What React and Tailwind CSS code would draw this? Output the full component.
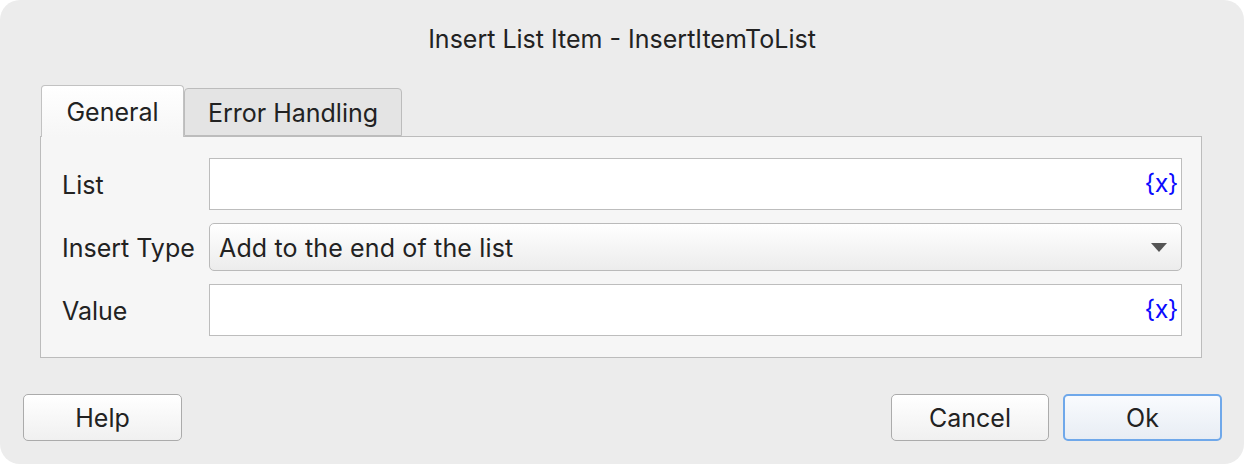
import React from 'react';

const font = { fontFamily: 'Inter, "Noto Sans", sans-serif' };

const VarButton = () => (
  <span className="text-[25px] text-[#0a0aff] leading-none tracking-[-0.5px] pb-[2px]">{'{x}'}</span>
);

const TextRow = ({ label }) => (
  <div className="flex items-center gap-0">
    <div className="w-[168px] pl-[21px] pt-[3px] text-[25px] text-[#222]">{label}</div>
    <div className="flex-1 h-[52px] bg-white border border-[#bdbdbd] flex items-center justify-end pr-[3px]">
      <VarButton />
    </div>
  </div>
);

export default function App() {
  return (
    <div style={font} className="w-[1244px] h-[464px] bg-[#ececec] rounded-[20px] flex flex-col text-[#222] overflow-hidden">
      <div className="h-[82px] flex items-center justify-center pb-[2px] text-[25px]">
        Insert List Item - InsertItemToList
      </div>

      <div className="px-[40px] pr-[42px]">
        <div className="flex items-end h-[54px] pl-[1px]">
          <div className="relative z-10 w-[143px] h-[52px] -mb-px bg-gradient-to-b from-white to-[#f6f6f6] border border-b-0 border-[#c2c2c2] rounded-t-[4px] flex items-center justify-center pt-[3px] text-[25px]">
            General
          </div>
          <div className="w-[218px] h-[48px] bg-[#e4e4e4] border border-[#bcbcbc] rounded-t-[4px] flex items-center justify-center pt-[3px] text-[25px]">
            Error Handling
          </div>
        </div>
        <div className="h-[222px] bg-[#f6f6f6] border border-[#bcbcbc] pt-[21px] pr-[19px] flex flex-col gap-[13px]">
          <TextRow label="List" />
          <div className="flex items-center">
            <div className="w-[168px] pl-[21px] pt-[3px] text-[25px]">Insert Type</div>
            <div className="flex-1 h-[48px] rounded-[5px] border border-[#bababa] bg-gradient-to-b from-white to-[#ececec] flex items-center justify-between pl-[9px] pr-[14px] text-[25px]">
              <span className="pt-[3px] tracking-[0.15px]">Add to the end of the list</span>
              <svg width="16" height="9" viewBox="0 0 16 9"><path d="M0 0h16L8 9z" fill="#555" /></svg>
            </div>
          </div>
          <TextRow label="Value" />
        </div>
      </div>

      <div className="flex justify-between items-center px-[23px] pr-[22px] mt-[36px]">
        <button className="w-[159px] h-[47px] rounded-[5px] border border-[#ababab] bg-gradient-to-b from-white to-[#f0f0f0] pt-[3px] text-[25px]">Help</button>
        <div className="flex gap-[14px]">
          <button className="w-[158px] h-[47px] rounded-[5px] border border-[#ababab] bg-gradient-to-b from-white to-[#f0f0f0] pt-[3px] text-[25px]">Cancel</button>
          <button className="w-[159px] h-[47px] rounded-[5px] border-2 border-[#6fa8ea] bg-gradient-to-b from-[#f9fbfe] to-[#e8edf4] pt-[3px] text-[25px]">Ok</button>
        </div>
      </div>
    </div>
  );
}
